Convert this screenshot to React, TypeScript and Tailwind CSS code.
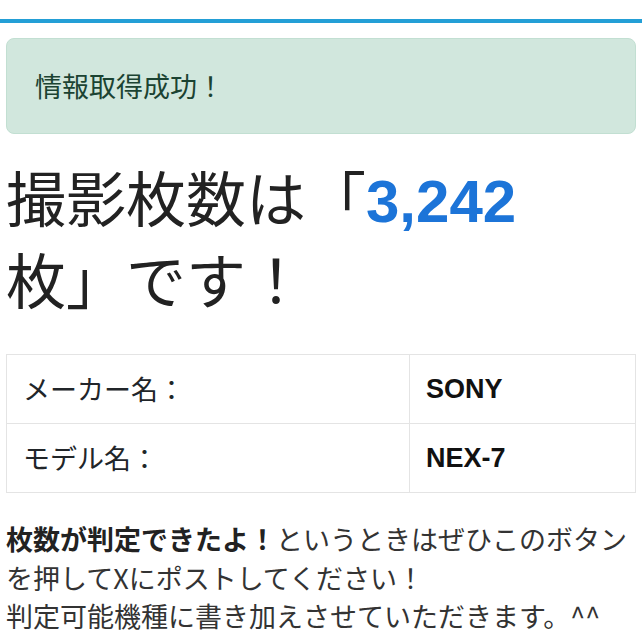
import React from "react";

export default function App() {
  return (
    <div
      className="min-h-[642px] w-full bg-white text-[#212529]"
      style={{ fontFamily: '"Noto Sans CJK JP", "Liberation Sans", sans-serif' }}
    >
      <div className="h-[19px]" />
      <div className="h-[4px] w-full bg-[#239fd6]" />
      <div className="px-[6px] pt-[15px]">
        <div className="rounded-[8px] border border-[#c2dfd2] bg-[#d1e7dd] px-[28px] py-[28px] text-[27px] leading-[38px] text-[#1b4332]">
          情報取得成功！
        </div>

        <h1 className="mt-[24px] text-[60px] font-normal leading-[76px] text-[#222]">
          撮影枚数は「
          <span
            className="font-bold text-[#1c74d8]"
            style={{ fontFamily: '"Liberation Sans", Arial, sans-serif' }}
          >
            3,242
          </span>
          <br />
          枚」です！
        </h1>

        <table className="mt-[38px] w-full border-collapse text-[27px] leading-[38px]">
          <tbody>
            <tr>
              <td className="w-[403px] border border-[#e4e4e4] px-[16px] py-[15px] align-middle">
                メーカー名：
              </td>
              <td
                className="border border-[#e4e4e4] px-[16px] py-[15px] align-middle font-bold text-[#111]"
                style={{ fontFamily: '"Liberation Sans", Arial, sans-serif' }}
              >
                SONY
              </td>
            </tr>
            <tr>
              <td className="w-[403px] border border-[#e4e4e4] px-[16px] py-[15px] align-middle">
                モデル名：
              </td>
              <td
                className="border border-[#e4e4e4] px-[16px] py-[15px] align-middle font-bold text-[#111]"
                style={{ fontFamily: '"Liberation Sans", Arial, sans-serif' }}
              >
                NEX-7
              </td>
            </tr>
          </tbody>
        </table>

        <p className="mt-[27px] text-[27px] leading-[38.5px] text-[#333]">
          <strong className="font-bold text-[#222]">枚数が判定できたよ！</strong>
          というときはぜひこのボタンを押してXにポストしてください！
          <br />
          判定可能機種に書き加えさせていただきます。^^
        </p>
      </div>
    </div>
  );
}
